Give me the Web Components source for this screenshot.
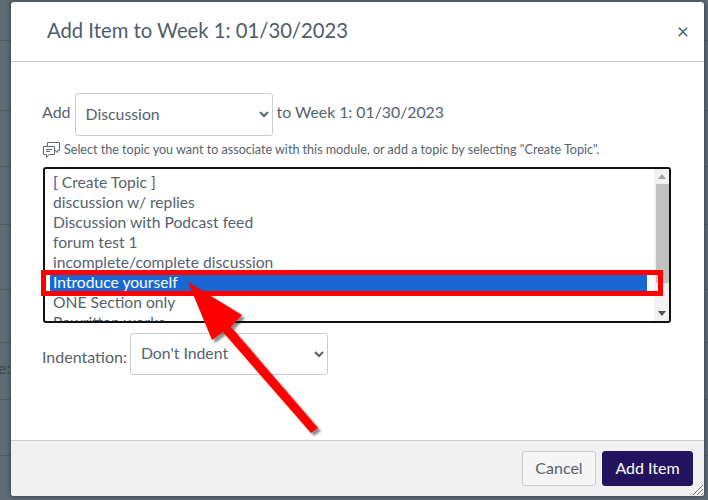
<!DOCTYPE html>
<html>
<head>
<meta charset="utf-8">
<title>Add Item</title>
<style>
  html, body { margin: 0; height: 100%; }
  body { font-family: Lato, "Noto Sans", sans-serif; background: #5f6b74; overflow: hidden; }
</style>
</head>
<body>
<page-backdrop>
  <add-item-dialog heading="Add Item to Week 1: 01/30/2023">
    <module-row>
      <span>Add</span>
      <native-select width="198" height="43" lift="2" value="Discussion"></native-select>
      <span class="to">to Week 1: 01/30/2023</span>
    </module-row>
    <topic-help>Select the topic you want to associate with this module, or add a topic by selecting "Create Topic".</topic-help>
    <topic-list></topic-list>
    <indent-row></indent-row>
    <dialog-button slot="footer">Cancel</dialog-button>
    <dialog-button slot="footer" primary>Add Item</dialog-button>
  </add-item-dialog>
  <red-annotation></red-annotation>
</page-backdrop>

<script>
// row lines of the page behind the dialog
const BACK_LINES = [40, 110, 166, 224, 289, 342, 399, 455];

class PageBackdrop extends HTMLElement {
  constructor() {
    super();
    const shadow = this.attachShadow({ mode: "open" });
    const stops = BACK_LINES.map((y) => `transparent ${y}px, #515d66 ${y}px, #515d66 ${y + 1}px, transparent ${y + 1}px`).join(", ");
    shadow.innerHTML = `
      <style>
        :host {
          display: block;
          position: relative;
          width: 708px;
          height: 500px;
          box-sizing: border-box;
          padding: 2px 4px 4px 11px;
          overflow: hidden;
          background: linear-gradient(${stops}), #5f6b74;
        }
        .behind {
          position: absolute;
          left: -2px;
          top: 358px;
          font-size: 16px;
          color: #3d4953;
        }
      </style>
      <span class="behind">e:</span>
      <slot></slot>
    `;
  }
}

class AddItemDialog extends HTMLElement {
  constructor() {
    super();
    const shadow = this.attachShadow({ mode: "open" });
    shadow.innerHTML = `
      <style>
        :host {
          display: flex;
          flex-direction: column;
          height: 100%;
          background: #fff;
          border-radius: 3px;
          position: relative;
          font-size: 16px;
          color: #56626c;
          box-shadow: 0 0 4px 1px rgba(45, 59, 69, .7);
        }
        header {
          height: 60px;
          box-sizing: border-box;
          border-bottom: 1px solid #c7cdd1;
          display: flex;
          align-items: center;
          justify-content: space-between;
          padding: 0 15px 3px 36px;
          flex: none;
        }
        h1 {
          margin: 0;
          font-size: 20.25px;
          font-weight: 400;
          color: #4f5c68;
        }
        .close { font-size: 21px; color: #56626c; line-height: 1; padding-top: 1px; }
        main { flex: 1; padding: 31px 33px 0 31px; }
        footer {
          flex: none;
          height: 56px;
          box-sizing: border-box;
          background: #f0f0f0;
          border-top: 1px solid #c7cdd1;
          display: flex;
          justify-content: flex-end;
          align-items: flex-start;
          gap: 6px;
          padding: 10px 11px 0 0;
          border-radius: 0 0 3px 3px;
          position: relative;
        }
        svg.grip { position: absolute; right: 0; bottom: 0; }
      </style>
      <header><h1></h1><span class="close">×</span></header>
      <main><slot></slot></main>
      <footer>
        <slot name="footer"></slot>
        <svg class="grip" width="12" height="12" viewBox="0 0 12 12" stroke="#6c757c" fill="none"><path d="M1 11 11 1M5 11 11 5M9 11 11 9"/></svg>
      </footer>
    `;
    shadow.querySelector("h1").textContent = this.getAttribute("heading");
  }
}

class ModuleRow extends HTMLElement {
  constructor() {
    super();
    const shadow = this.attachShadow({ mode: "open" });
    shadow.innerHTML = `
      <style>
        :host { display: flex; align-items: center; gap: 4px; height: 43px; }
        ::slotted(span) { padding-bottom: 6px; }
        ::slotted(.to) { font-size: 15.8px; }
      </style>
      <slot></slot>
    `;
  }
}

class NativeSelect extends HTMLElement {
  constructor() {
    super();
    const shadow = this.attachShadow({ mode: "open" });
    const w = this.getAttribute("width");
    const h = this.getAttribute("height");
    const lift = this.getAttribute("lift") || 0;
    shadow.innerHTML = `
      <style>
        :host { display: inline-block; }
        select {
          display: block;
          width: ${w}px;
          height: ${h}px;
          box-sizing: border-box;
          font: 15.8px Lato, "Noto Sans", sans-serif;
          color: #56626c;
          background: #fff;
          border: 1px solid #c7cdd1;
          border-radius: 3px;
          padding: 0 6px ${lift}px;
          margin: 0;
        }
      </style>
      <select><option></option></select>
    `;
    shadow.querySelector("option").textContent = this.getAttribute("value");
  }
}

class TopicHelp extends HTMLElement {
  constructor() {
    super();
    const shadow = this.attachShadow({ mode: "open" });
    shadow.innerHTML = `
      <style>
        :host {
          display: flex;
          align-items: center;
          gap: 3px;
          height: 22px;
          margin-top: 2px;
          font-size: 12.57px;
          color: #56626c;
        }
        svg { flex: none; margin-top: 2px; }
      </style>
      <svg width="19" height="18" viewBox="0 0 19 18" fill="none" stroke="#5c6872" stroke-width="1">
        <path d="M1.5 5.5H12.5V13.5H7L4.5 16.5V13.5H1.5Z"/>
        <path d="M5.5 5V1.5H17.5V9.5H15.5L15.5 11.5L13 9.5"/>
        <path d="M4 8.5H10M4 10.5H8"/>
      </svg>
      <span><slot></slot></span>
    `;
  }
}

const TOPICS = [
  "[ Create Topic ]",
  "discussion w/ replies",
  "Discussion with Podcast feed",
  "forum test 1",
  "incomplete/complete discussion",
  "Introduce yourself",
  "ONE Section only",
  "Rewritten works"
];

class TopicList extends HTMLElement {
  constructor() {
    super();
    const shadow = this.attachShadow({ mode: "open" });
    shadow.innerHTML = `
      <style>
        :host {
          display: flex;
          width: 628px;
          height: 156px;
          box-sizing: border-box;
          margin: 7px 0 0 1px;
          border: 2px solid #111;
          border-radius: 3px;
          overflow: hidden;
          background: #fff;
        }
        .rows { flex: 1; padding-top: 3px; overflow: hidden; font-size: 15.65px; }
        .row { height: 20px; line-height: 20px; padding-left: 8px; color: #56626c; white-space: nowrap; }
        .row b { font-weight: 400; color: #4a4aa0; }
        .row.sel {
          color: #fff;
          background: linear-gradient(90deg, #fff 5px, #1a67d3 5px, #1a67d3 602px, #fff 602px);
        }
        .bar {
          flex: none;
          width: 15px;
          background: #f1f1f1;
          display: flex;
          flex-direction: column;
          align-items: flex-end;
        }
        .up, .down { width: 15px; height: 15px; display: flex; align-items: center; justify-content: center; }
        .thumb { width: 13px; height: 99px; background: #c1c1c1; }
        .spacer { flex: 1; }
      </style>
      <div class="rows"></div>
      <div class="bar">
        <div class="up"><svg width="8" height="5"><path d="M4 0 8 5H0Z" fill="#a3a3a3"/></svg></div>
        <div class="thumb"></div>
        <div class="spacer"></div>
        <div class="down"><svg width="8" height="5"><path d="M0 0H8L4 5Z" fill="#505050"/></svg></div>
      </div>
    `;
    const rows = shadow.querySelector(".rows");
    TOPICS.forEach((t, i) => {
      const row = document.createElement("div");
      row.className = "row";
      if (i === 0) {
        row.innerHTML = "<b>[</b> Create Topic ]";
      } else {
        row.textContent = t;
      }
      if (i === 5) row.classList.add("sel");
      rows.appendChild(row);
    });
  }
}

class IndentRow extends HTMLElement {
  constructor() {
    super();
    const shadow = this.attachShadow({ mode: "open" });
    shadow.innerHTML = `
      <style>
        :host { display: flex; align-items: center; gap: 3px; margin-top: 10px; height: 42px; }
        span { padding-top: 4px; }
      </style>
      <span>Indentation:</span>
      <native-select width="198" height="42" lift="4" value="Don't Indent"></native-select>
    `;
  }
}

class DialogButton extends HTMLElement {
  constructor() {
    super();
    const shadow = this.attachShadow({ mode: "open" });
    shadow.innerHTML = `
      <style>
        :host {
          display: inline-flex;
          align-items: center;
          justify-content: center;
          height: 35px;
          box-sizing: border-box;
          width: 74px;
          padding-bottom: 2px;
          background: #f5f5f5;
          border: 1px solid #c7cdd1;
          border-radius: 3px;
          font-size: 16px;
          color: #56626c;
        }
        :host([primary]) {
          width: 91px;
          background: #23135f;
          border-color: #23135f;
          color: #fff;
        }
      </style>
      <slot></slot>
    `;
  }
}

// red box and arrow drawn over the screenshot
class RedAnnotation extends HTMLElement {
  constructor() {
    super();
    const shadow = this.attachShadow({ mode: "open" });
    shadow.innerHTML = `
      <style>
        :host { position: absolute; inset: 0; pointer-events: none; }
        svg { display: block; }
      </style>
      <svg width="708" height="500">
        <defs>
          <filter id="s" x="-20%" y="-20%" width="140%" height="140%">
            <feDropShadow dx="3" dy="3" stdDeviation="1.2" flood-color="#000" flood-opacity=".45"/>
          </filter>
        </defs>
        <rect x="43.5" y="272.5" width="617" height="21" fill="none" stroke="#f00" stroke-width="5"/>
        <polygon filter="url(#s)" fill="#f00" points="188,282 242,315 231,327 318,428 311,433 223,332 212,340"/>
      </svg>
    `;
  }
}

customElements.define("page-backdrop", PageBackdrop);
customElements.define("add-item-dialog", AddItemDialog);
customElements.define("module-row", ModuleRow);
customElements.define("native-select", NativeSelect);
customElements.define("topic-help", TopicHelp);
customElements.define("topic-list", TopicList);
customElements.define("indent-row", IndentRow);
customElements.define("dialog-button", DialogButton);
customElements.define("red-annotation", RedAnnotation);
</script>
</body>
</html>
